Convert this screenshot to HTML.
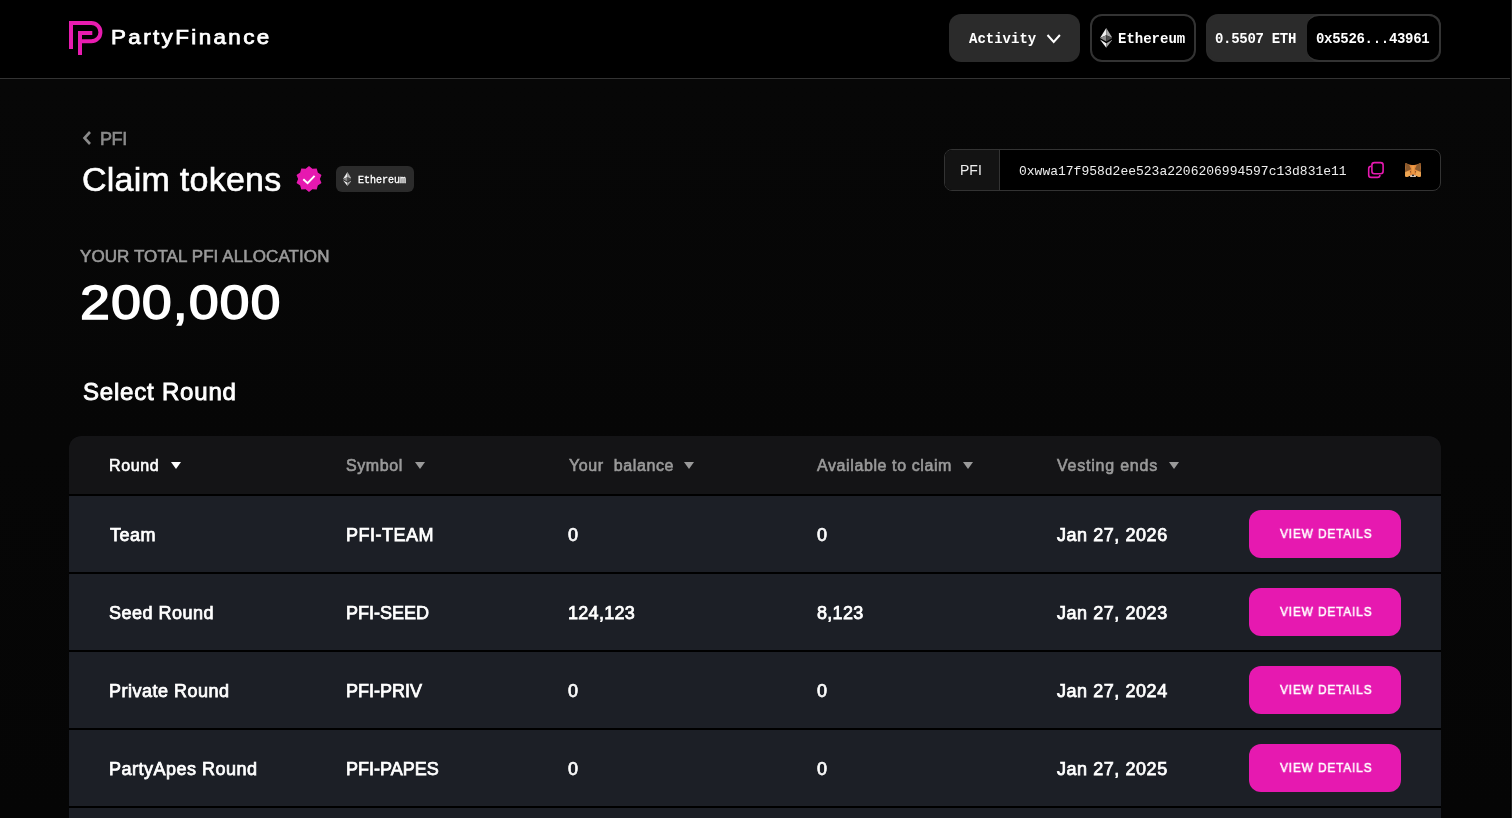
<!DOCTYPE html>
<html>
<head>
<meta charset="utf-8">
<style>
*{box-sizing:border-box;margin:0;padding:0}
html,body{width:1512px;height:818px;overflow:hidden;background:linear-gradient(#070707 80px,#050505 818px);font-family:"Liberation Sans",sans-serif;color:#fff}
.abs{position:absolute}
.t,.cell,.hc,.vd span{will-change:transform}
.mono{font-family:"Liberation Mono",monospace}
#hdr{position:absolute;left:0;top:0;width:1512px;height:79px;background:#000;border-bottom:1px solid #333}
.t{position:absolute;white-space:nowrap;line-height:1}
.btn{position:absolute;border-radius:12px}
#tbl{position:absolute;left:69px;top:436px;width:1372px;height:400px;background:#000;border-radius:12px 12px 0 0;overflow:hidden}
.th{position:absolute;left:0;top:0;width:1372px;height:58px;background:#141416}
.row{position:absolute;left:0;width:1372px;height:76px;background:#1c1f26}
.cell{position:absolute;white-space:nowrap;line-height:1;font-size:18px;letter-spacing:0.3px;color:#fff;-webkit-text-stroke:0.75px #fff}
.hc{position:absolute;white-space:nowrap;line-height:1;font-size:16px;letter-spacing:0.6px;color:#9a9a9a;top:22px;-webkit-text-stroke:0.6px #9a9a9a}
.tri{position:absolute;top:26px;width:0;height:0;border-left:5.75px solid transparent;border-right:5.75px solid transparent;border-top:7px solid #9a9a9a}
.vd{position:absolute;left:1180px;top:14px;width:152px;height:48px;background:#e619b0;border-radius:12px}
.vd span{position:absolute;left:30.5px;top:16.8px;white-space:nowrap;line-height:1;color:#fff;font-size:13px;letter-spacing:0.87px;-webkit-text-stroke:0.55px #fff;transform:scaleX(0.92);transform-origin:0 0}
</style>
</head>
<body>
<div id="hdr">
  <svg class="abs" style="left:0;top:0" width="120" height="78" viewBox="0 0 120 78">
    <path d="M71 49 V23 H91.25 A9.15 9.15 0 0 1 91.25 41.35 H80 M92.3 33 H80 V55" fill="none" stroke="#e81cb0" stroke-width="4" stroke-linejoin="miter"/>
  </svg>
  <div class="t" style="left:111px;top:27px;font-size:20px;letter-spacing:2.13px;-webkit-text-stroke:0.75px #fff;transform:scaleX(1.12);transform-origin:0 0">PartyFinance</div>

  <div class="btn" style="left:949px;top:14px;width:131px;height:48px;background:#2b2b2b"></div>
  <div class="t mono" style="left:969px;top:32px;font-size:14px;font-weight:bold">Activity</div>
  <svg class="abs" style="left:1046px;top:33px" width="16" height="12" viewBox="0 0 16 12"><path d="M1.5 2 L7.7 9 L13.9 2" fill="none" stroke="#fff" stroke-width="2"/></svg>

  <div class="btn" style="left:1090px;top:14px;width:106px;height:48px;border:2px solid #333;background:#000"></div>
  <svg class="abs" style="left:1099.8px;top:28px" width="12.5" height="19.7" viewBox="0 0 12.5 19.7">
    <polygon points="6.25,0 0,10 6.25,7.3" fill="#eeeeee"/>
    <polygon points="6.25,0 12.5,10 6.25,7.3" fill="#a8a8a8"/>
    <polygon points="0,10 6.25,7.3 6.25,13.6" fill="#8a8a8a"/>
    <polygon points="12.5,10 6.25,7.3 6.25,13.6" fill="#4a4a4a"/>
    <polygon points="0,11.6 6.25,15.3 6.25,19.7" fill="#f2f2f2"/>
    <polygon points="12.5,11.6 6.25,15.3 6.25,19.7" fill="#a0a0a0"/>
  </svg>
  <div class="t mono" style="left:1118px;top:32px;font-size:14px;font-weight:bold">Ethereum</div>

  <div class="btn" style="left:1206px;top:14px;width:235px;height:48px;background:#2b2b2b;border:2px solid #2b2b2b"></div>
  <div class="t mono" style="left:1215px;top:32px;font-size:14px;letter-spacing:-0.3px;font-weight:bold">0.5507 ETH</div>
  <div class="btn" style="left:1307px;top:14px;width:134px;height:48px;background:#000;border:2px solid #333;border-left:none;border-radius:12px"></div>
  <div class="t mono" style="left:1316px;top:32px;font-size:14px;letter-spacing:-0.3px;font-weight:bold">0x5526...43961</div>
</div>

<!-- breadcrumb -->
<svg class="abs" style="left:80px;top:129px" width="14" height="18" viewBox="0 0 14 18"><path d="M10 3 L4.5 9 L10 15" fill="none" stroke="#8a8a8a" stroke-width="2.6"/></svg>
<div class="t" style="left:100px;top:130px;font-size:18px;letter-spacing:-0.4px;color:#8a8a8a;-webkit-text-stroke:0.65px #8a8a8a">PFI</div>
<div class="t" style="left:82px;top:162px;font-size:34px;letter-spacing:0.25px;color:#fff;-webkit-text-stroke:0.6px #fff">Claim tokens</div>

<!-- verified badge -->
<svg class="abs" style="left:295px;top:165px" width="28" height="28" viewBox="0 0 28 28">
  <polygon fill="#e619b0" points="14.00,0.90 17.37,3.63 21.70,3.40 22.82,7.59 26.46,9.95 24.90,14.00 26.46,18.05 22.82,20.41 21.70,24.60 17.37,24.37 14.00,27.10 10.63,24.37 6.30,24.60 5.18,20.41 1.54,18.05 3.10,14.00 1.54,9.95 5.18,7.59 6.30,3.40 10.63,3.63"/>
  <path d="M8.3 14.2 L12.6 18.2 L19.6 10.9" fill="none" stroke="#fff" stroke-width="2"/>
</svg>
<div class="btn" style="left:336px;top:166px;width:78px;height:26px;background:#2b2b2b;border-radius:6px"></div>
<svg class="abs" style="left:342.6px;top:172px" width="8.9" height="14" viewBox="0 0 12.5 19.7">
  <polygon points="6.25,0 0,10 6.25,7.3" fill="#eeeeee"/>
  <polygon points="6.25,0 12.5,10 6.25,7.3" fill="#a8a8a8"/>
  <polygon points="0,10 6.25,7.3 6.25,13.6" fill="#8a8a8a"/>
  <polygon points="12.5,10 6.25,7.3 6.25,13.6" fill="#4a4a4a"/>
  <polygon points="0,11.6 6.25,15.3 6.25,19.7" fill="#f2f2f2"/>
  <polygon points="12.5,11.6 6.25,15.3 6.25,19.7" fill="#a0a0a0"/>
</svg>
<div class="t mono" style="left:358px;top:175.5px;font-size:10px;-webkit-text-stroke:0.3px #fff">Ethereum</div>

<!-- address box -->
<div class="abs" style="left:944px;top:149px;width:497px;height:42px;border:1px solid #333;border-radius:8px;background:#000;overflow:hidden">
  <div class="abs" style="left:0;top:0;width:55px;height:40px;background:#131313;border-right:1px solid #333"></div>
</div>
<div class="t" style="left:960px;top:163px;font-size:14px;color:#eee">PFI</div>
<div class="t mono" style="left:1019px;top:165px;font-size:13px;color:#eee">0xwwa17f958d2ee523a2206206994597c13d831e11</div>
<svg class="abs" style="left:1367px;top:161px" width="18" height="18" viewBox="0 0 18 18">
  <rect x="4.9" y="1.6" width="11.2" height="11.2" rx="2.5" fill="none" stroke="#e619b0" stroke-width="1.6"/>
  <path d="M4.2 5.2 A2.5 2.5 0 0 0 1.7 7.7 V13.9 A2.5 2.5 0 0 0 4.2 16.4 H10.4 A2.5 2.5 0 0 0 12.9 13.9" fill="none" stroke="#e619b0" stroke-width="1.6"/>
</svg>
<svg class="abs" style="left:1405px;top:162.8px" width="16" height="14.3" viewBox="0 0 16 14.3">
  <polygon points="0.5,0 4,1.6 8,2.2 12,1.6 15.5,0 16,5 15.6,8.5 16,13.2 14.2,14 11,12.8 10.5,14.3 5.5,14.3 5,12.8 1.8,14 0,13.2 0.4,8.5 0,5" fill="#e3883a"/>
  <polygon points="0.2,8.6 5,8 5,12.8 1.8,14 0,13.2" fill="#eea552"/>
  <polygon points="15.8,8.6 11,8 11,12.8 14.2,14 16,13.2" fill="#eea552"/>
  <polygon points="6.5,2.2 8,2.2 9.5,2.2 8.8,11 7.2,11" fill="#eb9a47"/>
  <polygon points="0.5,0 4,1.6 6.2,6.2 0.3,9" fill="#8a5a2e"/>
  <polygon points="15.5,0 12,1.6 9.8,6.2 15.7,9" fill="#8a5a2e"/>
  <path d="M5,12.4 Q8,11 11,12.4 L10.6,14.3 H5.4 Z" fill="#d8cabd"/>
  <ellipse cx="8" cy="12.3" rx="1.2" ry="0.9" fill="#2e2e2e"/>
  <circle cx="5.4" cy="8.8" r="0.6" fill="#5a3a20"/>
  <circle cx="10.6" cy="8.8" r="0.6" fill="#5a3a20"/>
</svg>

<!-- allocation -->
<div class="t" style="left:80px;top:248px;font-size:17px;letter-spacing:0.08px;color:#9a9a9a;-webkit-text-stroke:0.6px #9a9a9a">YOUR TOTAL PFI ALLOCATION</div>
<div class="t" style="left:80px;top:278.3px;font-size:49px;letter-spacing:0.85px;color:#fff;-webkit-text-stroke:1.4px #fff;transform:scaleX(1.1);transform-origin:0 0">200,000</div>
<div class="t" style="left:83px;top:380px;font-size:24px;letter-spacing:0.8px;color:#fff;-webkit-text-stroke:0.9px #fff">Select Round</div>

<!-- table -->
<div id="tbl">
  <div class="th">
    <div class="hc" style="left:40px;color:#fff;-webkit-text-stroke-color:#fff">Round</div><div class="tri" style="left:102px;border-top-color:#fff"></div>
    <div class="hc" style="left:277px">Symbol</div><div class="tri" style="left:346px"></div>
    <div class="hc" style="left:500px">Your&nbsp; balance</div><div class="tri" style="left:615px"></div>
    <div class="hc" style="left:748px">Available to claim</div><div class="tri" style="left:894px"></div>
    <div class="hc" style="left:988px;letter-spacing:0.78px">Vesting ends</div><div class="tri" style="left:1100px"></div>
  </div>
  <div class="row" style="top:60px">
    <div class="cell" style="left:40.5px;top:30px;letter-spacing:0.5px">Team</div>
    <div class="cell" style="left:277px;top:30px;letter-spacing:0.5px">PFI-TEAM</div>
    <div class="cell" style="left:499px;top:30px">0</div>
    <div class="cell" style="left:748px;top:30px">0</div>
    <div class="cell" style="left:988px;top:30px;letter-spacing:0.55px">Jan 27, 2026</div>
    <div class="vd"><span>VIEW DETAILS</span></div>
  </div>
  <div class="row" style="top:138px">
    <div class="cell" style="left:40px;top:30px;letter-spacing:0.5px">Seed Round</div>
    <div class="cell" style="left:277px;top:30px;letter-spacing:0px">PFI-SEED</div>
    <div class="cell" style="left:499px;top:30px">124,123</div>
    <div class="cell" style="left:748px;top:30px">8,123</div>
    <div class="cell" style="left:988px;top:30px;letter-spacing:0.55px">Jan 27, 2023</div>
    <div class="vd"><span>VIEW DETAILS</span></div>
  </div>
  <div class="row" style="top:216px">
    <div class="cell" style="left:40px;top:30px;letter-spacing:0.5px">Private Round</div>
    <div class="cell" style="left:277px;top:30px;letter-spacing:0px">PFI-PRIV</div>
    <div class="cell" style="left:499px;top:30px">0</div>
    <div class="cell" style="left:748px;top:30px">0</div>
    <div class="cell" style="left:988px;top:30px;letter-spacing:0.55px">Jan 27, 2024</div>
    <div class="vd"><span>VIEW DETAILS</span></div>
  </div>
  <div class="row" style="top:294px">
    <div class="cell" style="left:40px;top:30px;letter-spacing:0.5px">PartyApes Round</div>
    <div class="cell" style="left:277px;top:30px;letter-spacing:0px">PFI-PAPES</div>
    <div class="cell" style="left:499px;top:30px">0</div>
    <div class="cell" style="left:748px;top:30px">0</div>
    <div class="cell" style="left:988px;top:30px;letter-spacing:0.55px">Jan 27, 2025</div>
    <div class="vd"><span>VIEW DETAILS</span></div>
  </div>
  <div class="row" style="top:372px"></div>
</div>
<div class="abs" style="left:1510px;top:0;width:1px;height:818px;background:#000"></div>
<div class="abs" style="left:1511px;top:0;width:1px;height:818px;background:#212121"></div>

</body>
</html>
